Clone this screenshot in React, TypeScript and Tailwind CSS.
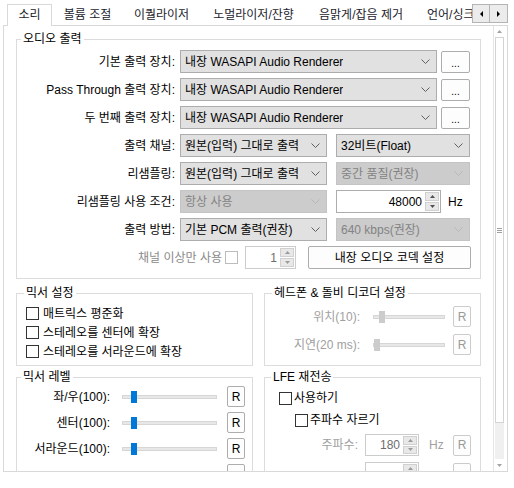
import clsx from "clsx";
import type { ReactNode } from "react";

const tabs = [
  { label: "볼륨 조절", w: "w-[71px]" },
  { label: "이퀄라이저", w: "w-[77px]" },
  { label: "노멀라이저/잔향", w: "w-[107px]" },
  { label: "음맑게/잡음 제거", w: "w-[108px]" },
];

function Chevron({ off }: { off?: boolean }) {
  return (
    <svg
      width="9"
      height="5"
      viewBox="0 0 9 5"
      className={clsx("shrink-0", off ? "text-[#b8b8b8]" : "text-[#606060]")}
    >
      <path d="M0.5 0.5 4.5 4.5 8.5 0.5" fill="none" stroke="currentColor" />
    </svg>
  );
}

function Tri({ up, color = "#505050" }: { up?: boolean; color?: string }) {
  return (
    <svg width="5" height="3" viewBox="0 0 5 3" className="shrink-0">
      <path d={up ? "M0 3 2.5 0 5 3Z" : "M0 0 2.5 3 5 0Z"} fill={color} />
    </svg>
  );
}

function Combo({ text, className, off }: { text: string; className: string; off?: boolean }) {
  return (
    <div
      className={clsx(
        "flex h-[23px] shrink-0 items-center justify-between border pl-[4px] pr-[6px]",
        off ? "border-[#c4c4c4] bg-[#cccccc] text-[#838383]" : "border-[#adadad] bg-[#e1e1e1]",
        className,
      )}
    >
      <span className="truncate">{text}</span>
      <Chevron off={off} />
    </div>
  );
}

function Spin({ value, className, off }: { value?: string; className: string; off?: boolean }) {
  return (
    <div
      className={clsx(
        "flex shrink-0 border bg-white",
        off ? "border-[#cccccc] text-[#6d6d6d]" : "border-[#adadad]",
        className,
      )}
    >
      <div className="flex flex-1 items-center justify-end pr-[3px]">{value}</div>
      <div className="flex w-[15px] flex-col gap-px py-px pr-px">
        <div className="flex flex-1 items-center justify-center border border-[#d0d0d0] bg-[#e8e8e8]">
          <Tri up color={off ? "#9a9a9a" : "#505050"} />
        </div>
        <div className="flex flex-1 items-center justify-center border border-[#d0d0d0] bg-[#e8e8e8]">
          <Tri color={off ? "#9a9a9a" : "#505050"} />
        </div>
      </div>
    </div>
  );
}

function Btn({ children, className, off }: { children?: ReactNode; className: string; off?: boolean }) {
  return (
    <button
      type="button"
      className={clsx(
        "flex shrink-0 items-center justify-center rounded-[2px] border bg-[#fdfdfd]",
        off ? "border-[#cccccc] text-[#9a9a9a]" : "border-[#adadad]",
        className,
      )}
    >
      {children}
    </button>
  );
}

function Check({ off }: { off?: boolean }) {
  return (
    <span
      className={clsx(
        "h-[13px] w-[13px] shrink-0 border bg-white",
        off ? "border-[#bcbcbc]" : "border-[#333333]",
      )}
    />
  );
}

function Slider({ className, pos, off }: { className: string; pos: number; off?: boolean }) {
  return (
    <div className={clsx("relative flex h-[14px] shrink-0 items-center", className)}>
      <div className="h-[4px] w-full border border-[#d6d6d6] bg-[#e7e7e7]" />
      <div
        className={clsx("absolute top-px h-[12px] w-[6px]", off ? "bg-[#cccccc]" : "bg-[#0078d7]")}
        style={{ left: pos }}
      />
    </div>
  );
}

function Group({ title, legend, children }: { title: string; legend: string; children: ReactNode }) {
  return (
    <fieldset className="min-w-0 border border-[#dcdcdc]">
      <legend className={clsx("px-[2px] leading-[14px]", legend)}>{title}</legend>
      {children}
    </fieldset>
  );
}

function Label({ children }: { children: ReactNode }) {
  return <div className="w-[158px] shrink-0 whitespace-nowrap text-right">{children}</div>;
}

function DeviceRow({ label }: { label: string }) {
  return (
    <div className="flex h-[23px] items-center">
      <Label>{label}</Label>
      <Combo text="내장 WASAPI Audio Renderer" className="ml-[5px] w-[257px]" />
      <Btn className="ml-[4px] h-[22px] w-[29px] pt-[4px] text-[10px]">...</Btn>
    </div>
  );
}

function LevelRow({ label, pos }: { label: string; pos: number }) {
  return (
    <div className="flex h-[21px] items-center">
      <div className="w-[93px] shrink-0 whitespace-nowrap text-right">{label}</div>
      <Slider className="ml-[12px] w-[95px]" pos={pos} />
      <Btn className="ml-[10px] h-[21px] w-[18px]">R</Btn>
    </div>
  );
}

function HeadRow({ label, pos }: { label: string; pos: number }) {
  return (
    <div className="flex h-[21px] items-center">
      <div className="w-[95px] shrink-0 whitespace-nowrap text-right text-[#a0a0a0]">{label}</div>
      <Slider className="ml-[13px] w-[72px]" pos={pos} off />
      <Btn className="ml-[8px] h-[21px] w-[18px]" off>
        R
      </Btn>
    </div>
  );
}

export default function App() {
  return (
    <div className="h-[488px] w-[514px] overflow-hidden bg-white font-['Liberation_Sans','Noto_Sans_CJK_KR',sans-serif] text-[12px] leading-[16px] text-black">
      {/* tab strip */}
      <div className="relative h-[25px]">
        <div className="flex h-full items-end pl-[7px] text-[#1c1c2c]">
          <div className="relative z-10 -mb-px flex h-[22px] w-[45px] items-center justify-center border border-b-0 border-[#d9d9d9] bg-white pb-[2px]">
            소리
          </div>
          {tabs.map((t) => (
            <div key={t.label} className={clsx("flex h-[21px] shrink-0 items-center justify-center whitespace-nowrap", t.w)}>
              {t.label}
            </div>
          ))}
          <div className="flex h-[21px] shrink-0 items-center whitespace-nowrap pl-[12px]">언어/싱크</div>
        </div>
        <div className="absolute right-[6px] top-[4px] z-20 flex">
          <div className="flex h-[19px] w-[18px] items-center justify-center border border-[#b4b4b4] bg-[#ececec]">
            <svg width="3" height="6" viewBox="0 0 3 6">
              <path d="M3 0 0 3 3 6Z" fill="#000" />
            </svg>
          </div>
          <div className="flex h-[19px] w-[18px] items-center justify-center border border-l-0 border-[#b4b4b4] bg-[#ececec]">
            <svg width="3" height="6" viewBox="0 0 3 6">
              <path d="M0 0 3 3 0 6Z" fill="#000" />
            </svg>
          </div>
        </div>
      </div>

      {/* tab page */}
      <div className="ml-[3px] flex h-[447px] w-[505px] border border-[#d9d9d9] bg-white">
        <div className="min-w-0 flex-1 overflow-hidden px-[12px] pt-[6px]">
          <Group title="오디오 출력" legend="ml-[4px]">
            <div className="flex flex-col gap-[5px] pb-[9px] pr-[9px] pt-[4px]">
              <DeviceRow label="기본 출력 장치:" />
              <DeviceRow label="Pass Through 출력 장치:" />
              <DeviceRow label="두 번째 출력 장치:" />
              <div className="flex h-[23px] items-center">
                <Label>출력 채널:</Label>
                <Combo text="원본(입력) 그대로 출력" className="ml-[5px] w-[147px]" />
                <Combo text="32비트(Float)" className="ml-[9px] w-[134px]" />
              </div>
              <div className="flex h-[23px] items-center">
                <Label>리샘플링:</Label>
                <Combo text="원본(입력) 그대로 출력" className="ml-[5px] w-[147px]" />
                <Combo text="중간 품질(권장)" className="ml-[9px] w-[134px]" off />
              </div>
              <div className="flex h-[23px] items-center">
                <Label>리샘플링 사용 조건:</Label>
                <Combo text="항상 사용" className="ml-[5px] w-[147px]" off />
                <Spin value="48000" className="ml-[9px] h-[23px] w-[105px]" />
                <span className="ml-[7px]">Hz</span>
              </div>
              <div className="flex h-[23px] items-center">
                <Label>출력 방법:</Label>
                <Combo text="기본 PCM 출력(권장)" className="ml-[5px] w-[147px]" />
                <Combo text="640 kbps(권장)" className="ml-[9px] w-[134px]" off />
              </div>
              <div className="flex h-[23px] items-center justify-end">
                <span className="whitespace-nowrap text-[#8a8a8a]">채널 이상만 사용</span>
                <span className="ml-[3px] flex">
                  <Check off />
                </span>
                <Spin value="1" className="ml-[7px] h-[23px] w-[51px]" off />
                <Btn className="ml-[12px] h-[23px] w-[163px]">내장 오디오 코덱 설정</Btn>
              </div>
            </div>
          </Group>

          <div className="mt-[7px] grid grid-cols-[237px_217px] gap-x-[11px] gap-y-[4px]">
            <Group title="믹서 설정" legend="ml-[7px]">
              <div className="flex flex-col pb-[4px] pl-[9px] pt-[4px]">
                {["매트릭스 평준화", "스테레오를 센터에 확장", "스테레오를 서라운드에 확장"].map((t) => (
                  <label key={t} className="flex h-[19px] items-center gap-[4px] whitespace-nowrap">
                    <Check />
                    {t}
                  </label>
                ))}
              </div>
            </Group>

            <Group title="헤드폰 & 돌비 디코더 설정" legend="ml-[7px]">
              <div className="flex flex-col gap-[7px] pb-[9px] pt-[6px]">
                <HeadRow label="위치(10):" pos={6} />
                <HeadRow label="지연(20 ms):" pos={1} />
              </div>
            </Group>

            <Group title="믹서 레벨" legend="ml-[4px]">
              <div className="flex flex-col gap-[5px] pt-[2px]">
                <LevelRow label="좌/우(100):" pos={9} />
                <LevelRow label="센터(100):" pos={9} />
                <LevelRow label="서라운드(100):" pos={9} />
                <div className="flex h-[21px] items-start pl-[210px]">
                  <Btn className="h-[21px] w-[18px]" />
                </div>
              </div>
            </Group>

            <Group title="LFE 재전송" legend="ml-[6px]">
              <div className="flex flex-col pt-[4px]">
                <label className="flex h-[20px] items-center gap-[2px] whitespace-nowrap pl-[14px]">
                  <Check />
                  사용하기
                </label>
                <label className="mt-[2px] flex h-[20px] items-center gap-[2px] whitespace-nowrap pl-[30px]">
                  <Check />
                  주파수 자르기
                </label>
                <div className="mt-[4px] flex h-[22px] items-center pr-[9px]">
                  <div className="w-[93px] shrink-0 text-right text-[#a0a0a0]">주파수:</div>
                  <Spin value="180" className="ml-[7px] h-[22px] w-[54px]" off />
                  <span className="ml-[10px] text-[#a0a0a0]">Hz</span>
                  <Btn className="ml-auto h-[21px] w-[18px]" off>
                    R
                  </Btn>
                </div>
                <div className="mt-[6px] flex h-[22px] items-center pr-[9px]">
                  <div className="w-[93px] shrink-0" />
                  <Spin className="ml-[7px] h-[22px] w-[54px]" off />
                  <Btn className="ml-auto h-[21px] w-[18px]" off />
                </div>
              </div>
            </Group>
          </div>
        </div>

        {/* vertical scrollbar */}
        <div className="flex w-[14px] shrink-0 flex-col border-l border-[#e6e6e6]">
          <div className="flex h-[11px] items-center justify-center pr-[2px]">
            <Tri up color="#a3a3a3" />
          </div>
          <div className="ml-[1px] flex h-[386px] w-[9px] flex-col items-center justify-center gap-[1px] border border-[#d4d4d4] bg-white">
            <span className="h-px w-[5px] bg-[#a0a0a0]" />
            <span className="h-px w-[5px] bg-[#a0a0a0]" />
            <span className="h-px w-[5px] bg-[#a0a0a0]" />
          </div>
          <div className="ml-[1px] w-[9px] flex-1 bg-[#f0f0f0]" />
          <div className="flex h-[12px] items-center justify-center pr-[2px]">
            <Tri color="#a3a3a3" />
          </div>
        </div>
      </div>
    </div>
  );
}
